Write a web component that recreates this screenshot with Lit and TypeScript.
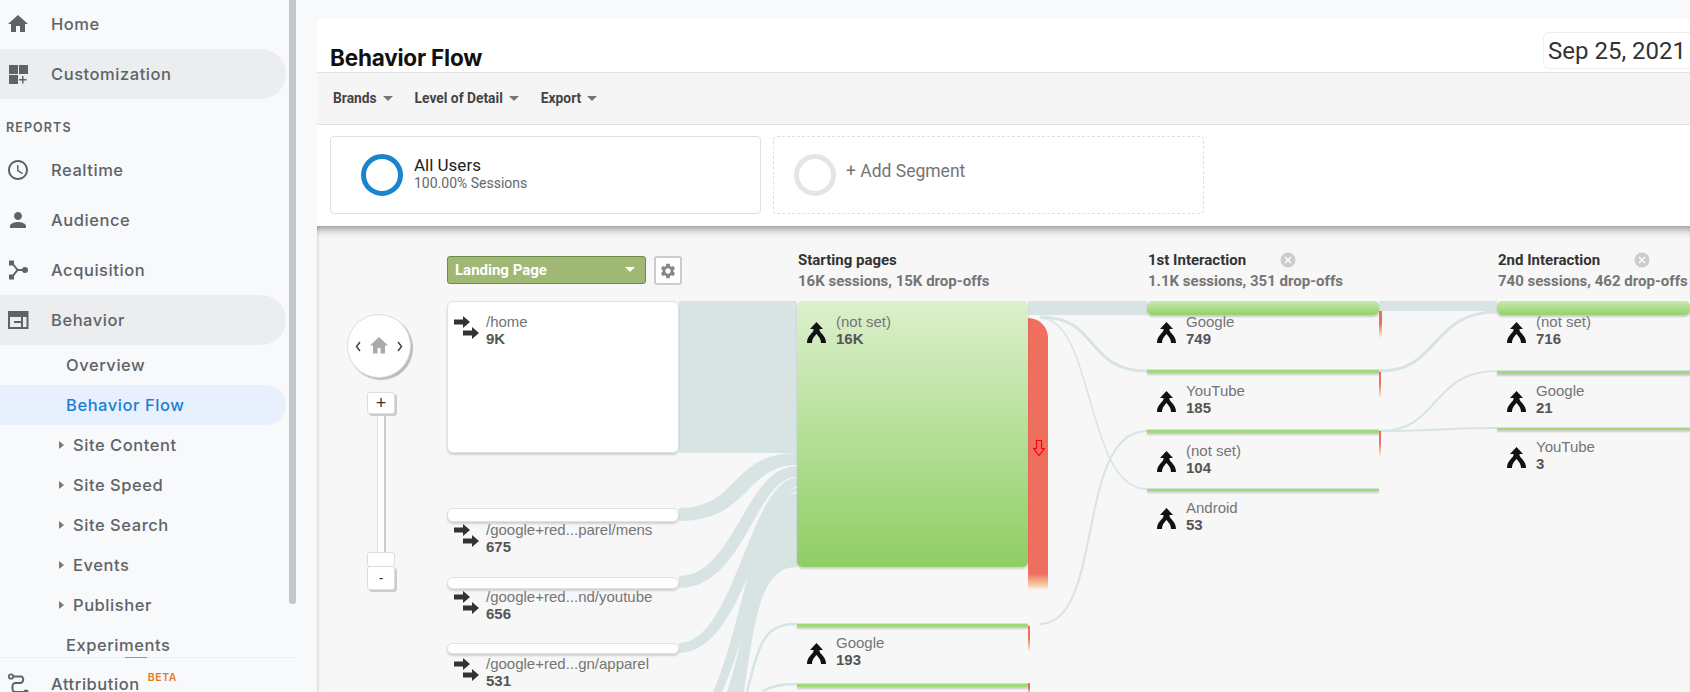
import { css, html, LitElement, svg } from "lit";
import { customElement } from "lit/decorators.js";
import { classMap } from "lit/directives/class-map.js";

interface NavRow {
  label: string;
  icon?: string;
  kind?: "top" | "sub" | "tree";
  pill?: boolean;
  active?: boolean;
}

interface FlowNode {
  x: number;
  y: number;
  w: number;
  h: number;
  labelY: number;
  label: string;
  value: string;
  icon: "arrows" | "merge";
  style: "white" | "green" | "band" | "thin";
}

interface Drop {
  x: number;
  y: number;
  w: number;
  h: number;
}

const ICONS: Record<string, ReturnType<typeof svg>> = {
  home: svg`<path d="M10 20v-6h4v6h5v-8h3L12 3 2 12h3v8z" />`,
  custom: svg`<path d="M3 3h9v9H3zm10 0h9v9h-9zM3 13h9v9H3zm14.5 1h-1.5v3h-3v1.5h3v3h1.5v-3h3V17h-3z" />`,
  clock: svg`<path d="M11.99 2C6.47 2 2 6.48 2 12s4.47 10 9.99 10C17.52 22 22 17.52 22 12S17.52 2 11.99 2zM12 20c-4.42 0-8-3.58-8-8s3.58-8 8-8 8 3.58 8 8-3.58 8-8 8zm.5-13H11v6l5.25 3.15.75-1.23-4.5-2.67z" />`,
  person: svg`<path d="M12 12c2.21 0 4-1.79 4-4s-1.79-4-4-4-4 1.79-4 4 1.79 4 4 4zm0 2c-2.67 0-8 1.34-8 4v2h16v-2c0-2.66-5.33-4-8-4z" />`,
  acquisition: svg`<path d="M3 2.5h5v5H3zM3 16.5h5v5H3z" /><circle cx="19" cy="12" r="3" /><path d="M6 5l5.5 7L6 19M11 12h7" fill="none" stroke="currentColor" stroke-width="2" />`,
  behavior: svg`<path d="M2 3h20.500v18H2zM4 9v10h11v-4H8v-2h7V9zm13 0v10h3.500V9z" fill-rule="evenodd" />`,
  attribution: svg`<circle cx="5" cy="4.500" r="2.200" fill="none" stroke="currentColor" stroke-width="1.800" /><circle cx="20" cy="20" r="2.600" /><path d="M7.500 4.500H15c3 0 3 6-.5 6.500H9c-3.500.5-3.500 9 0 9h9" fill="none" stroke="currentColor" stroke-width="2" />`,
};

const NAV: NavRow[] = [
  { label: "Realtime", icon: "clock", kind: "top" },
  { label: "Audience", icon: "person", kind: "top" },
  { label: "Acquisition", icon: "acquisition", kind: "top" },
  { label: "Behavior", icon: "behavior", kind: "top", pill: true },
  { label: "Overview", kind: "sub" },
  { label: "Behavior Flow", kind: "sub", pill: true, active: true },
  { label: "Site Content", kind: "tree" },
  { label: "Site Speed", kind: "tree" },
  { label: "Site Search", kind: "tree" },
  { label: "Events", kind: "tree" },
  { label: "Publisher", kind: "tree" },
  { label: "Experiments", kind: "sub" },
];

// Canvas origin on the page; node coordinates below are page coordinates
const OX = 317;
const OY = 226;

const NODES: FlowNode[] = [
  { x: 447, y: 301, w: 232, h: 152, labelY: 313, label: "/home", value: "9K", icon: "arrows", style: "white" },
  { x: 447, y: 508, w: 232, h: 14, labelY: 521, label: "/google+red...parel/mens", value: "675", icon: "arrows", style: "white" },
  { x: 447, y: 577, w: 232, h: 12, labelY: 588, label: "/google+red...nd/youtube", value: "656", icon: "arrows", style: "white" },
  { x: 447, y: 643, w: 232, h: 11, labelY: 655, label: "/google+red...gn/apparel", value: "531", icon: "arrows", style: "white" },
  { x: 797, y: 301, w: 231, h: 266, labelY: 313, label: "(not set)", value: "16K", icon: "merge", style: "green" },
  { x: 797, y: 623, w: 231, h: 4, labelY: 634, label: "Google", value: "193", icon: "merge", style: "thin" },
  { x: 797, y: 683, w: 231, h: 4, labelY: 701, label: "", value: "", icon: "merge", style: "thin" },
  { x: 1147, y: 301, w: 232, h: 14, labelY: 313, label: "Google", value: "749", icon: "merge", style: "band" },
  { x: 1147, y: 369, w: 232, h: 4, labelY: 382, label: "YouTube", value: "185", icon: "merge", style: "thin" },
  { x: 1147, y: 429, w: 232, h: 4, labelY: 442, label: "(not set)", value: "104", icon: "merge", style: "thin" },
  { x: 1147, y: 488, w: 232, h: 3, labelY: 499, label: "Android", value: "53", icon: "merge", style: "thin" },
  { x: 1497, y: 301, w: 193, h: 14, labelY: 313, label: "(not set)", value: "716", icon: "merge", style: "band" },
  { x: 1497, y: 370, w: 193, h: 4, labelY: 382, label: "Google", value: "21", icon: "merge", style: "thin" },
  { x: 1497, y: 427, w: 193, h: 3, labelY: 438, label: "YouTube", value: "3", icon: "merge", style: "thin" },
];

const DROPS: Drop[] = [
  { x: 1028, y: 626, w: 2, h: 26 },
  { x: 1028, y: 683, w: 2, h: 12 },
  { x: 1379, y: 311, w: 3, h: 27 },
  { x: 1379, y: 372, w: 2, h: 26 },
  { x: 1379, y: 431, w: 2, h: 26 },
];

const COLUMNS = [
  { x: 798, title: "Starting pages", sub: "16K sessions, 15K drop-offs", close: 0 },
  { x: 1148, title: "1st Interaction", sub: "1.1K sessions, 351 drop-offs", close: 1288 },
  { x: 1498, title: "2nd Interaction", sub: "740 sessions, 462 drop-offs", close: 1642 },
];

// Filled ribbons between columns
const RIBBONS = [
  "M679 301H797V453H679z",
  "M679 508C740 508 730 453 797 453V465C745 465 750 521 679 521z",
  "M679 576C735 576 745 466 797 466V477C755 477 745 588 679 588z",
  "M679 643C735 643 750 478 797 478V487C765 487 745 653 679 653z",
  "M713 692C745 620 755 490 797 488V492C770 492 755 620 722 692z",
  "M727 692C752 620 758 496 797 493V567C760 567 755 620 744 692z",
  "M1028 301H1147V315H1028z",
  "M1379 301H1497V311H1379z",
];

// Thin links, stroked
const LINKS = [
  { d: "M1040 317C1100 317 1085 371 1147 371", w: 3 },
  { d: "M1040 318C1095 318 1085 489 1147 489", w: 1.500 },
  { d: "M1040 624C1105 624 1075 431 1147 431", w: 2 },
  { d: "M1379 371C1440 372 1430 312 1497 312", w: 3 },
  { d: "M1379 431C1440 432 1430 371 1497 371", w: 2 },
  { d: "M1379 431C1430 431 1450 428 1497 428", w: 2 },
  { d: "M747 692C760 640 765 624 797 624", w: 2.500 },
  { d: "M762 692C770 686 780 684 797 684", w: 2.500 },
];

@customElement("app-root")
export class AppRoot extends LitElement {
  private icon(name: string) {
    return html`<svg class="nav-icon" viewBox="0 0 24 24" fill="currentColor">
      ${ICONS[name]}
    </svg>`;
  }

  private navRow(row: NavRow) {
    return html`<div
      class=${classMap({
        row: true,
        top: row.kind === "top",
        sub: row.kind !== "top",
        pill: row.pill === true,
        active: row.active === true,
      })}
    >
      ${row.icon ? this.icon(row.icon) : ""}
      ${row.kind === "tree" ? html`<span class="tri"></span>` : ""}
      <span>${row.label}</span>
    </div>`;
  }

  private sidebar() {
    return html`<aside>
      <div class="nav">
        <div class="nav-scroll">
          ${this.navRow({ label: "Home", icon: "home", kind: "top" })}
          ${this.navRow({ label: "Customization", icon: "custom", kind: "top", pill: true })}
          <div class="section">REPORTS</div>
          ${NAV.map((r) => this.navRow(r))}
        </div>
        <div class="footer">
          <div class="row top">
            ${this.icon("attribution")}
            <span>Attribution</span>
            <sup class="beta">BETA</sup>
          </div>
        </div>
      </div>
      <div class="scrolltrack"><div class="thumb"></div></div>
    </aside>`;
  }

  private header() {
    return html`<header>
      <h1>Behavior Flow</h1>
      <div class="date">Sep 25, 2021</div>
    </header>
    <div class="toolbar">
      ${["Brands", "Level of Detail", "Export"].map(
        (t) => html`<span class="tool">${t}<i class="caret"></i></span>`
      )}
    </div>
    <div class="segments">
      <div class="seg">
        <span class="ring blue"></span>
        <div class="seg-text">
          <div class="seg-name">All Users</div>
          <div class="seg-sub">100.00% Sessions</div>
        </div>
      </div>
      <div class="seg add">
        <span class="ring grey"></span>
        <div class="add-label">+ Add Segment</div>
      </div>
    </div>`;
  }

  private nodeIcon(kind: FlowNode["icon"]) {
    if (kind === "arrows") {
      return html`<svg class="arrows" viewBox="0 0 26 24" fill="#333">
        <path d="M0 3.500h9V0l7 6-7 6V8.500H0z" />
        <path d="M9 14.500h9V11l7 6-7 6v-3.500H9z" />
      </svg>`;
    }
    return html`<svg class="merge" viewBox="0 0 19 21">
      <path
        d="M9.500 0L16 7H12.500V8C12.500 11 19 13 19 21H14C14 16 10.500 13.500 9.500 12C8.500 13.500 5 16 5 21H0C0 13 6.500 11 6.500 8V7H3z"
        fill="#111"
      />
    </svg>`;
  }

  private flowNode(n: FlowNode) {
    return html`<div
        class="node ${n.style}"
        style="left:${n.x - OX}px;top:${n.y - OY}px;width:${n.w}px;height:${n.h}px"
      ></div>
      ${n.label
        ? html`<div class="label" style="left:${n.x - OX}px;top:${n.labelY - OY}px">
            <span class="slot ${n.icon}-slot">${this.nodeIcon(n.icon)}</span>
            <div>
              <div class="name">${n.label}</div>
              <div class="value">${n.value}</div>
            </div>
          </div>`
        : ""}`;
  }

  private canvas() {
    return html`<section class="canvas">
      <svg class="ribbons" viewBox="${OX} ${OY} 1373 466" width="1373" height="466">
        ${RIBBONS.map((d) => svg`<path d=${d} fill="#d8e4e4" />`)}
        ${LINKS.map(
          (l) => svg`<path d=${l.d} fill="none" stroke="#d8e4e4" stroke-width=${l.w} />`
        )}
      </svg>

      <div class="navigator">
        <svg viewBox="0 0 64 64" width="64" height="64">
          <path d="M13 28l-3.500 4.500 3.500 4.500M51 28l3.500 4.500-3.500 4.500" fill="none" stroke="#345" stroke-width="1.500" />
          <path d="M32 23l-9 8.500h3v8h4.500V34h3v5.500H38v-8h3z" fill="#aaa" />
        </svg>
      </div>
      <div class="zoom-track"></div>
      <div class="zoom-btn plus">+</div>
      <div class="zoom-handle"></div>
      <div class="zoom-btn minus">-</div>

      <div class="dropdown">Landing Page<i class="caret white"></i></div>
      <div class="gear">
        <svg viewBox="0 0 24 24" width="18" height="18" fill="#888">
          <path d="M19.14 12.94c.04-.3.06-.61.06-.94 0-.32-.02-.64-.07-.94l2.03-1.58c.18-.14.23-.41.12-.61l-1.92-3.32c-.12-.22-.37-.29-.59-.22l-2.39.96c-.5-.38-1.03-.7-1.62-.94l-.36-2.54c-.04-.24-.24-.41-.48-.41h-3.84c-.24 0-.43.17-.47.41l-.36 2.54c-.59.24-1.13.57-1.62.94l-2.39-.96c-.22-.08-.47 0-.59.22L2.74 8.87c-.12.21-.08.47.12.61l2.03 1.58c-.05.3-.09.63-.09.94s.02.64.07.94l-2.03 1.58c-.18.14-.23.41-.12.61l1.92 3.32c.12.22.37.29.59.22l2.39-.96c.5.38 1.03.7 1.62.94l.36 2.54c.05.24.24.41.48.41h3.84c.24 0 .44-.17.47-.41l.36-2.54c.59-.24 1.13-.56 1.62-.94l2.39.96c.22.08.47 0 .59-.22l1.92-3.32c.12-.22.07-.47-.12-.61l-2.01-1.58zM12 15.600c-1.980 0-3.600-1.620-3.600-3.600s1.620-3.600 3.600-3.600 3.600 1.620 3.600 3.600-1.620 3.600-3.600 3.600z" />
        </svg>
      </div>

      ${COLUMNS.map(
        (c) => html`<div class="col-head" style="left:${c.x - OX}px">
            <div class="col-title">${c.title}</div>
            <div class="col-sub">${c.sub}</div>
          </div>
          ${c.close
            ? html`<svg class="close" style="left:${c.close - 8 - OX}px" viewBox="0 0 16 16">
                <circle cx="8" cy="8" r="7.500" fill="#ccc" />
                <path d="M5 5l6 6M11 5l-6 6" stroke="#fff" stroke-width="1.500" />
              </svg>`
            : ""}`
      )}

      <div class="drop big"></div>
      <svg class="drop-arrow" viewBox="0 0 12 16">
        <path d="M3.500 .5h5v8h3L6 15.500.5 8.500h3z" fill="none" stroke="#f00" stroke-width="1.200" />
      </svg>
      ${DROPS.map(
        (d) => html`<div
          class="drop"
          style="left:${d.x - OX}px;top:${d.y - OY}px;width:${d.w}px;height:${d.h}px"
        ></div>`
      )}
      ${NODES.map((n) => this.flowNode(n))}
    </section>`;
  }

  protected render() {
    return html`${this.sidebar()}
      <main>${this.header()}${this.canvas()}</main>`;
  }

  static styles = css`
    :host {
      display: flex;
      width: 1690px;
      height: 692px;
      overflow: hidden;
      background: #f8f9fb;
      font-family: Inter, "Open Sans", sans-serif;
      color: #5f6368;
    }

    /* sidebar */
    aside {
      display: flex;
      flex: none;
      width: 296px;
      height: 692px;
    }
    .nav {
      display: flex;
      flex-direction: column;
      width: 289px;
    }
    .nav-scroll {
      flex: none;
      height: 659px;
      overflow: hidden;
      margin-top: -1px;
    }
    .scrolltrack {
      width: 7px;
    }
    .thumb {
      width: 7px;
      height: 604px;
      background: #c4c6c9;
      border-radius: 0 0 3px 3px;
    }
    .row {
      display: flex;
      align-items: center;
      width: 286px;
      box-sizing: border-box;
      white-space: nowrap;
      font-size: 16.500px;
      letter-spacing: 0.55px;
      font-weight: 500;
    }
    .row.top {
      height: 50px;
      padding-left: 6px;
    }
    .row.sub {
      height: 40px;
      padding-left: 66px;
    }
    .row.pill {
      background: #ebedef;
      border-radius: 0 25px 25px 0;
    }
    .row.active {
      background: #e8f0fe;
      color: #1a7fd4;
    }
    .nav-icon {
      flex: none;
      width: 24px;
      height: 24px;
      margin-right: 21px;
    }
    .tri {
      flex: none;
      width: 0;
      height: 0;
      margin-left: -7px;
      margin-right: 9px;
      border-left: 5px solid #777;
      border-top: 4.500px solid transparent;
      border-bottom: 4.500px solid transparent;
    }
    .section {
      display: flex;
      align-items: flex-end;
      height: 36px;
      padding: 0 0 10px 6px;
      font-size: 12.500px;
      font-weight: 600;
      letter-spacing: 1.100px;
    }
    .footer {
      position: relative;
      flex: none;
      height: 33px;
      margin-top: -1px;
      border-top: 1px solid #eceef0;
      width: 296px;
      background: #f8f9fb;
    }
    .footer::before {
      content: "";
      position: absolute;
      left: 125px;
      top: -1px;
      width: 22px;
      height: 1px;
      background: #9a9a9a;
    }
    .footer .row {
      margin-top: 1px;
    }
    .beta {
      margin: -13px 0 0 8px;
      font-size: 10.500px;
      font-weight: 600;
      letter-spacing: 0.6px;
      color: #e07b22;
    }

    /* main column */
    main {
      flex: none;
      width: 1373px;
      margin: 19px 0 0 21px;
      background: #fff;
    }
    header {
      display: flex;
      justify-content: space-between;
      height: 54px;
      box-sizing: border-box;
      padding: 13px 0 0 13px;
      border-bottom: 1px solid #e4e4e4;
    }
    h1 {
      margin: 11px 0 0;
      font-size: 22.500px;
      line-height: 30px;
      font-weight: 700;
      color: #111;
      letter-spacing: -0.2px;
    }
    .date {
      flex: none;
      width: 160px;
      height: 37px;
      box-sizing: border-box;
      margin-right: -13px;
      padding-left: 4px;
      border: 1px solid #eee;
      border-radius: 6px;
      font-family: Roboto, sans-serif;
      font-size: 24px;
      line-height: 36px;
      color: #333;
    }
    .toolbar {
      display: flex;
      align-items: center;
      gap: 22px;
      height: 52px;
      box-sizing: border-box;
      padding: 0 0 1px 16px;
      background: #f5f5f5;
      border-bottom: 1px solid #e0e0e0;
      font-family: Roboto, sans-serif;
      font-size: 13.800px;
      font-weight: 700;
      color: #444;
    }
    .tool {
      display: flex;
      align-items: center;
    }
    .caret {
      display: inline-block;
      width: 0;
      height: 0;
      margin-left: 6px;
      border-top: 5px solid #777;
      border-left: 5px solid transparent;
      border-right: 5px solid transparent;
    }
    .caret.white {
      margin-left: auto;
      border-top-color: #fff;
    }
    .segments {
      display: flex;
      gap: 12px;
      height: 101px;
      box-sizing: border-box;
      padding: 11px 0 0 13px;
      font-family: Roboto, sans-serif;
    }
    .seg {
      display: flex;
      align-items: center;
      gap: 11px;
      width: 431px;
      height: 78px;
      box-sizing: border-box;
      padding-left: 30px;
      border: 1px solid #e0e0e0;
      border-radius: 4px;
    }
    .seg.add {
      border: 1px dashed #e0e0e0;
      padding-left: 20px;
      gap: 10px;
    }
    .seg-text {
      margin-bottom: 1px;
    }
    .ring {
      flex: none;
      width: 42px;
      height: 42px;
      box-sizing: border-box;
      border-radius: 50%;
      border: 5px solid #1a84cc;
    }
    .ring.grey {
      border-color: #e5e5e5;
    }
    .seg-name {
      font-size: 17px;
      line-height: 18px;
      color: #222;
    }
    .seg-sub {
      font-size: 14px;
      line-height: 19px;
      color: #666;
    }
    .add-label {
      font-size: 17.500px;
      color: #757575;
      margin-bottom: 9px;
    }

    /* flow diagram, nodes are placed by coordinates */
    .canvas {
      position: relative;
      height: 466px;
      overflow: hidden;
      background: #f7f7f7;
      box-shadow: inset 0 10px 9px -7px rgba(0, 0, 0, 0.42),
        inset 3px 0 3px -2px rgba(0, 0, 0, 0.12);
      font-family: "Liberation Sans", Arial, sans-serif;
    }
    .ribbons {
      position: absolute;
      left: 0;
      top: 0;
    }
    .navigator {
      position: absolute;
      left: 30px;
      top: 88px;
      width: 64px;
      height: 64px;
      border-radius: 50%;
      background: #fff;
      border: 1px solid #ddd;
      box-sizing: border-box;
      box-shadow: 2px 2px 1px #bbb;
    }
    .navigator svg {
      display: block;
      margin: -1px;
    }
    .zoom-track {
      position: absolute;
      left: 60px;
      top: 186px;
      width: 9px;
      height: 141px;
      box-sizing: border-box;
      background: #fff;
      border: 1px solid #ddd;
      border-right: 2px solid #ccc;
    }
    .zoom-btn {
      position: absolute;
      left: 50px;
      width: 28px;
      box-sizing: border-box;
      display: flex;
      align-items: center;
      justify-content: center;
      background: #fff;
      border: 1px solid #ddd;
      border-radius: 3px;
      box-shadow: 2px 2px 0 #ccc;
      color: #333;
      font-size: 18px;
    }
    .zoom-btn.plus {
      top: 166px;
      height: 22px;
    }
    .zoom-btn.minus {
      top: 340px;
      height: 24px;
      font-size: 14px;
    }
    .zoom-handle {
      position: absolute;
      left: 50px;
      top: 326px;
      width: 28px;
      height: 15px;
      box-sizing: border-box;
      background: #fff;
      border: 1px solid #ddd;
      border-radius: 3px;
    }
    .dropdown {
      position: absolute;
      left: 130px;
      top: 30px;
      display: flex;
      align-items: center;
      width: 199px;
      height: 28px;
      box-sizing: border-box;
      padding: 0 10px 1px 7px;
      background: #9fb874;
      border: 1px solid #6f8a4a;
      border-radius: 3px;
      color: #fff;
      font-family: Roboto, sans-serif;
      font-size: 15px;
      font-weight: 700;
    }
    .gear {
      position: absolute;
      left: 337px;
      top: 30px;
      width: 28px;
      height: 29px;
      box-sizing: border-box;
      display: flex;
      align-items: center;
      justify-content: center;
      background: #fff;
      border: 2px solid #ccc;
      border-radius: 3px;
    }
    .col-head {
      position: absolute;
      top: 24px;
      font-family: Roboto, sans-serif;
      font-size: 15px;
      font-weight: 700;
      white-space: nowrap;
    }
    .col-title {
      line-height: 20px;
      color: #333;
    }
    .col-sub {
      line-height: 22px;
      color: #757575;
    }
    .close {
      position: absolute;
      top: 26px;
      width: 16px;
      height: 16px;
    }
    .node {
      position: absolute;
      box-sizing: border-box;
    }
    .node.white {
      background: #fff;
      border: 1px solid #d8e4e4;
      border-radius: 6px;
      box-shadow: 0 2px 2px rgba(0, 0, 0, 0.15);
    }
    .node.green {
      background: linear-gradient(#dcf0cc, #8fce64);
      border-radius: 5px;
      box-shadow: 0 2px 2px rgba(0, 0, 0, 0.15);
    }
    .node.band {
      background: linear-gradient(#c8e8b0, #94d16a);
      border-radius: 5px;
      box-shadow: 0 2px 2px rgba(0, 0, 0, 0.18);
    }
    .node.thin {
      background: #a2d97c;
      border-top: 1px solid #d3e0e0;
      box-shadow: 0 2px 2px rgba(0, 0, 0, 0.18);
    }
    .drop {
      position: absolute;
      background: linear-gradient(#ef6f5f 45%, #f5c9a0 80%, transparent);
    }
    .drop.big {
      left: 711px;
      top: 92px;
      width: 20px;
      height: 272px;
      border-radius: 0 20px 0 0;
      background: linear-gradient(#ef6f5f 94%, #f5c9a0 98%, transparent);
    }
    .drop-arrow {
      position: absolute;
      left: 716px;
      top: 214px;
      width: 12px;
      height: 16px;
    }
    .label {
      position: absolute;
      display: flex;
      white-space: nowrap;
    }
    .slot {
      flex: none;
      box-sizing: border-box;
      width: 39px;
    }
    .arrows-slot {
      padding: 3px 0 0 7px;
    }
    .merge-slot {
      padding: 9px 0 0 10px;
    }
    .arrows {
      display: block;
      width: 26px;
      height: 24px;
    }
    .merge {
      display: block;
      width: 19px;
      height: 21px;
    }
    .name {
      font-size: 15px;
      line-height: 17px;
      color: #757575;
    }
    .value {
      font-size: 15px;
      line-height: 17px;
      font-weight: 700;
      color: #555;
    }
  `;
}
